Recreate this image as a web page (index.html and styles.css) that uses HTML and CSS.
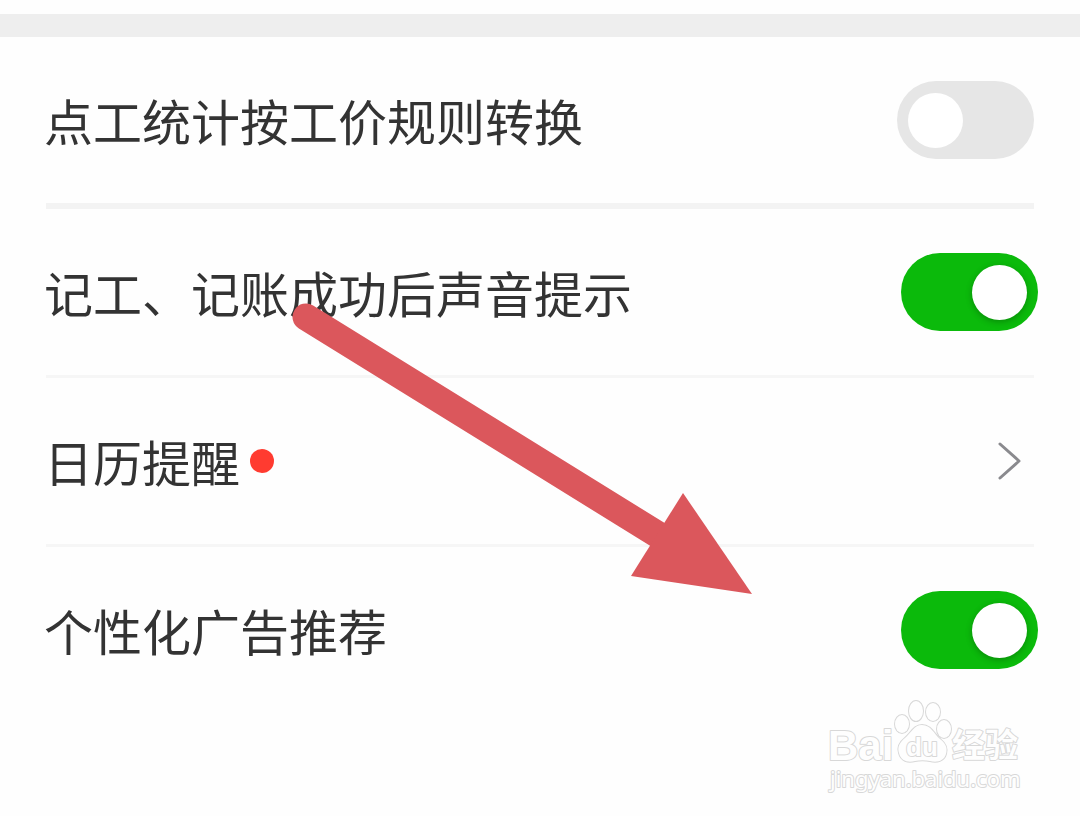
FILE: index.html
```
<!DOCTYPE html>
<html lang="zh-CN">
<head>
  <meta charset="UTF-8" />
  <meta name="viewport" content="width=device-width, initial-scale=1.0" />
  <title>设置</title>
  <link rel="stylesheet" href="styles.css">
</head>
<body>

  <div class="section-gap"></div>

  <main class="settings">
    <div class="row row-inset">
      <label class="row-label" for="convert">点工统计按工价规则转换</label>
      <input type="checkbox" id="convert" class="switch">
    </div>
    <hr class="divider divider-thick">

    <div class="row">
      <label class="row-label" for="sound">记工、记账成功后声音提示</label>
      <input type="checkbox" id="sound" class="switch" checked>
    </div>
    <hr class="divider">

    <a class="row" href="#calendar">
      <span class="row-label">日历提醒</span>
      <span class="dot"></span>
      <svg class="chevron" width="26" height="42" viewBox="0 0 26 42" aria-hidden="true">
        <path d="M3 4 L22 21 L3 38" />
      </svg>
    </a>
    <hr class="divider">

    <div class="row">
      <label class="row-label" for="ads">个性化广告推荐</label>
      <input type="checkbox" id="ads" class="switch" checked>
    </div>
  </main>

  <!-- Pointer arrow -->
  <svg class="arrow" width="464" height="296" viewBox="290 300 464 296" aria-hidden="true">
    <path class="arrow-shaft" d="M306 317 L660 536" />
    <path class="arrow-head" d="M683 493 L752 594 L631 576 Z" />
  </svg>

  <!-- Watermark -->
  <svg class="watermark" width="200" height="100" viewBox="825 698 200 100">
    <ellipse cx="902" cy="724" rx="7" ry="9" />
    <ellipse cx="916" cy="711" rx="7" ry="10" />
    <ellipse cx="933" cy="712" rx="7" ry="9" />
    <ellipse cx="944" cy="729" rx="7" ry="9" />
    <path d="M922 725 C914 725 911 733 905 738 C900 742 897 747 899 753 C901 761 908 763 915 761 C920 760 925 760 930 761 C937 763 944 761 946 754 C948 747 945 743 940 739 C934 734 931 725 922 725 Z" />
    <text class="mark-bai" x="828" y="760">Bai</text>
    <text class="mark-du" x="906" y="756">du</text>
    <text class="mark-cn" x="952" y="757">经验</text>
    <text class="mark-url" x="830" y="787">jingyan.baidu.com</text>
  </svg>

</body>
</html>
```

FILE: styles.css
```
* {
  margin: 0;
  padding: 0;
  box-sizing: border-box;
}
body {
  position: relative;
  min-height: 100vh;
  padding-top: 14px;
  background: #fefefe;
  color: #333;
  font-family: "Noto Sans CJK SC", sans-serif;
}
.section-gap {
  height: 23px;
  background: #eee;
}
.settings {
  padding: 0 42px 0 44px;
}
.row {
  display: flex;
  align-items: center;
  height: 166px;
  color: inherit;
  text-decoration: none;
}
.row-inset {
  padding-right: 4px;
}
.row-label {
  font-size: 49px;
  line-height: 72px;
}
.divider {
  height: 3px;
  margin: 0 4px 0 2px;
  border: none;
  background: #f6f6f6;
}
.divider-thick {
  height: 6px;
  background: #f3f3f3;
}
/* Toggle switch */
.switch {
  appearance: none;
  display: flex;
  align-items: center;
  width: 137px;
  height: 78px;
  margin-left: auto;
  padding: 0 11px;
  border-radius: 39px;
  background: #e6e6e6;
  cursor: pointer;
}
.switch::before {
  content: "";
  width: 55px;
  height: 55px;
  border-radius: 50%;
  background: #fff;
}
.switch:checked {
  justify-content: flex-end;
  background: #0bba0b;
}
.switch:checked::before {
  box-shadow: 0 2px 6px rgba(0, 0, 0, 0.25);
}
.dot {
  width: 24px;
  height: 24px;
  margin-left: 10px;
  border-radius: 50%;
  background: #ff3b30;
}
.chevron {
  margin-left: auto;
  margin-right: 15px;
  fill: none;
  stroke: #8a8a8e;
  stroke-width: 3;
  stroke-linecap: round;
  stroke-linejoin: round;
}
.arrow {
  position: absolute;
  top: 300px;
  left: 290px;
  pointer-events: none;
}
.arrow-shaft {
  stroke: #db575c;
  stroke-width: 27;
  stroke-linecap: round;
}
.arrow-head {
  fill: #db575c;
}
.watermark {
  position: absolute;
  top: 698px;
  right: 55px;
  fill: #fefefe;
  stroke: #d8d8d8;
  stroke-width: 2;
  stroke-linejoin: round;
  paint-order: stroke;
}
.mark-bai,
.mark-du {
  font-family: "Liberation Sans", Arial, sans-serif;
  font-weight: bold;
}
.mark-bai {
  font-size: 42px;
}
.mark-du {
  font-size: 26px;
}
.mark-cn {
  font-size: 33px;
  font-weight: bold;
}
.mark-url {
  font-family: "Noto Sans", sans-serif;
  font-size: 22px;
}
```
